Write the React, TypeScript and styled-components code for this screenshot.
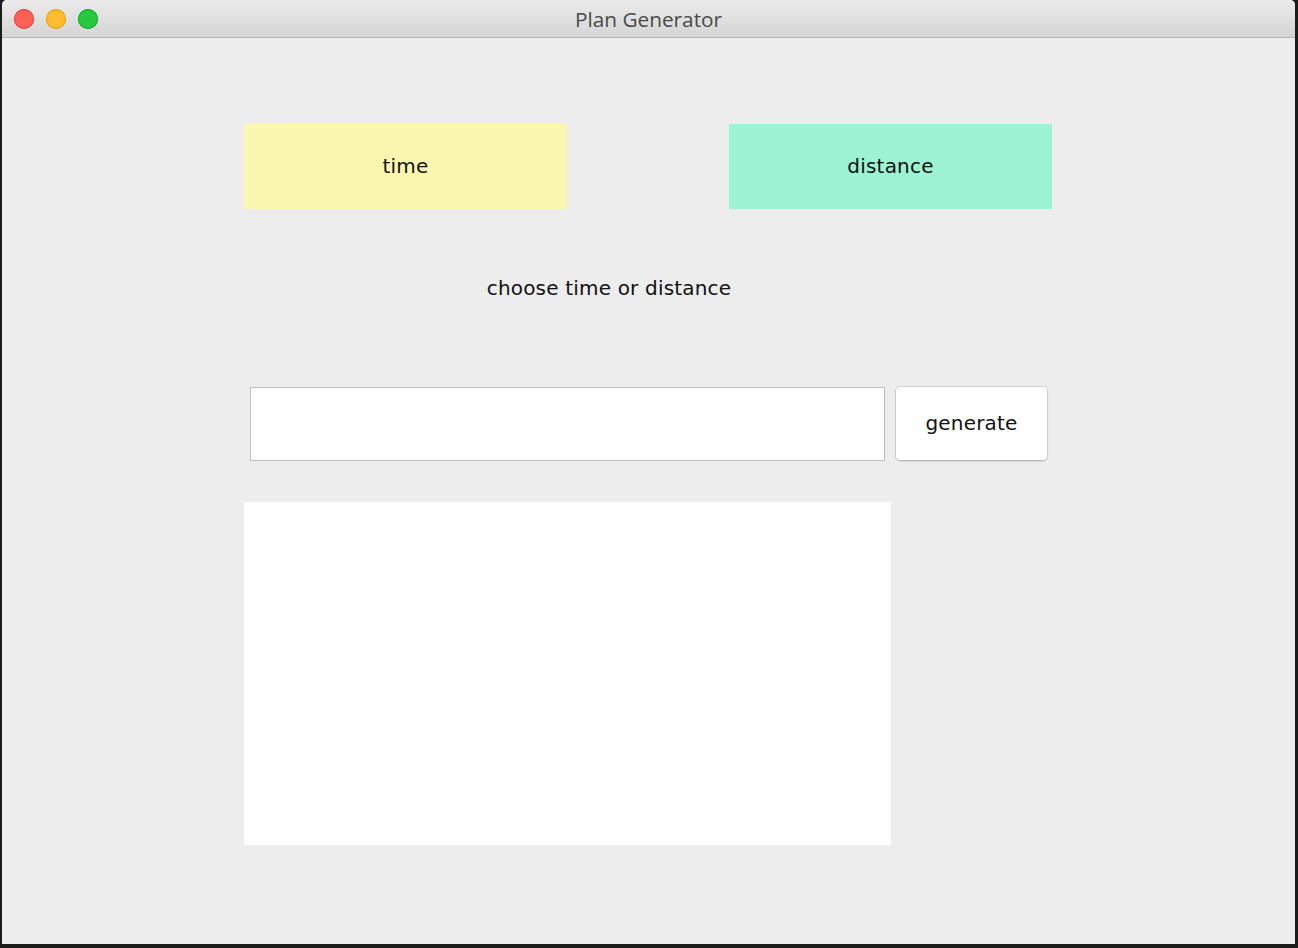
import React from "react";
import styled, { createGlobalStyle } from "styled-components";

const Global = createGlobalStyle`
  html, body { margin: 0; padding: 0; background: #1b1c18; }
  body { width: 1298px; height: 948px; overflow: hidden; font-family: "DejaVu Sans", "Liberation Sans", sans-serif; }
`;

const Window = styled.div`
  margin-left: 2px;
  width: 1293px;
  height: 944px;
  background: #ededed;
  display: flex;
  flex-direction: column;
  border-radius: 5px 5px 0 0;
  overflow: hidden;
`;

const TitleBar = styled.div`
  height: 37px;
  border-bottom: 1px solid #b4b4b4;
  background: linear-gradient(#ebebeb, #d5d5d5);
  display: flex;
  align-items: center;
  position: relative;
  flex-shrink: 0;
`;

const Lights = styled.div`
  display: flex;
  gap: 12px;
  padding-left: 12px;
`;

const Light = styled.span<{ $c: string; $b: string }>`
  width: 20px;
  height: 20px;
  border-radius: 50%;
  background: ${(p) => p.$c};
  box-shadow: inset 0 0 0 1px ${(p) => p.$b};
`;

const Title = styled.div`
  position: absolute;
  left: 0;
  right: 0;
  top: 1px;
  bottom: 0;
  display: flex;
  align-items: center;
  justify-content: center;
  font-family: "Open Sans", "Liberation Sans", sans-serif;
  font-size: 20.8px;
  color: #4a4a4a;
  pointer-events: none;
`;

const Content = styled.div`
  padding: 86px 0 0 242px;
  display: flex;
  flex-direction: column;
`;

const ChoiceRow = styled.div`
  display: flex;
  gap: 162px;
`;

const Choice = styled.div<{ $bg: string }>`
  width: 323px;
  height: 85px;
  padding-bottom: 2px;
  box-sizing: border-box;
  background: ${(p) => p.$bg};
  display: flex;
  align-items: center;
  justify-content: center;
  font-size: 20px;
  letter-spacing: 0.2px;
  color: #111;
`;

const Label = styled.div`
  margin-top: 67px;
  width: 730px;
  text-align: center;
  font-size: 20px;
  letter-spacing: 0.18px;
  line-height: 24px;
  color: #111;
`;

const InputRow = styled.div`
  margin-top: 86px;
  margin-left: 6px;
  display: flex;
  align-items: flex-end;
  gap: 10px;
`;

const Input = styled.div`
  width: 635px;
  height: 74px;
  box-sizing: border-box;
  background: #fff;
  border: 1px solid #bfbfbf;
`;

const Button = styled.div`
  width: 153px;
  height: 75px;
  padding-bottom: 2px;
  box-sizing: border-box;
  background: #fff;
  border: 1px solid #cdcdcd;
  border-bottom-color: #b8b8b8;
  border-radius: 5px;
  box-shadow: 0 1px 1px rgba(0, 0, 0, 0.08);
  display: flex;
  align-items: center;
  justify-content: center;
  font-size: 20px;
  letter-spacing: 0.2px;
  color: #111;
`;

const Output = styled.div`
  margin-top: 41px;
  width: 647px;
  height: 343px;
  background: #fff;
`;

export default function App() {
  return (
    <>
      <Global />
      <Window>
        <TitleBar>
          <Lights>
            <Light $c="#fe5f57" $b="#e2463f" />
            <Light $c="#febc2e" $b="#e1a116" />
            <Light $c="#28c840" $b="#14ae2b" />
          </Lights>
          <Title>Plan Generator</Title>
        </TitleBar>
        <Content>
          <ChoiceRow>
            <Choice $bg="#fbf7b1">time</Choice>
            <Choice $bg="#9cf4d2">distance</Choice>
          </ChoiceRow>
          <Label>choose time or distance</Label>
          <InputRow>
            <Input />
            <Button>generate</Button>
          </InputRow>
          <Output />
        </Content>
      </Window>
    </>
  );
}
